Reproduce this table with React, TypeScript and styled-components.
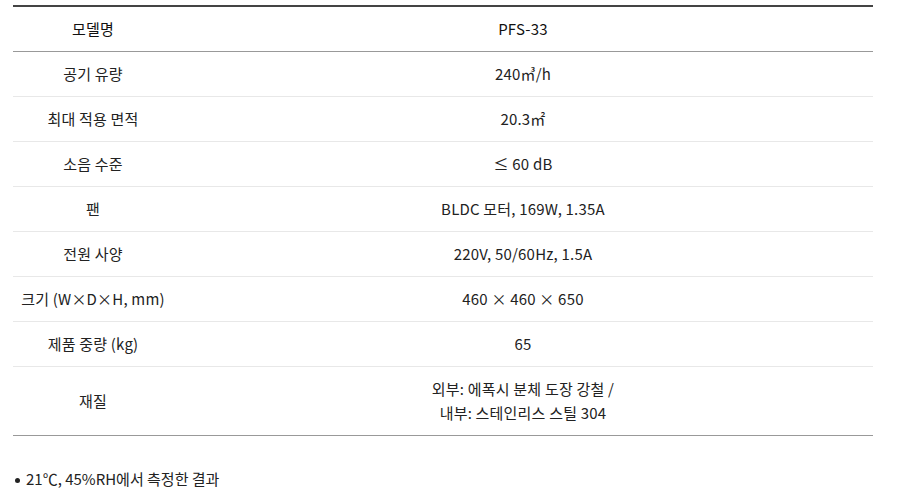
import styled, { createGlobalStyle } from "styled-components"

const specs: { label: string; value: string[] }[] = [
  { label: "공기 유량", value: ["240㎥/h"] },
  { label: "최대 적용 면적", value: ["20.3㎡"] },
  { label: "소음 수준", value: ["≤ 60 dB"] },
  { label: "팬", value: ["BLDC 모터, 169W, 1.35A"] },
  { label: "전원 사양", value: ["220V, 50/60Hz, 1.5A"] },
  { label: "크기 (W×D×H, mm)", value: ["460 × 460 × 650"] },
  { label: "제품 중량 (kg)", value: ["65"] },
  { label: "재질", value: ["외부: 에폭시 분체 도장 강철 /", "내부: 스테인리스 스틸 304"] },
]

export default function App() {
  return (
    <>
      <GlobalStyle />
      <Page>
        <SpecTable>
          <thead>
            <tr>
              <HeadCell $label>모델명</HeadCell>
              <HeadCell>PFS-33</HeadCell>
            </tr>
          </thead>
          <tbody>
            {specs.map((row, i) => (
              <Row key={row.label} $last={i === specs.length - 1}>
                <LabelCell>{row.label}</LabelCell>
                <ValueCell>
                  {row.value.map(line => (
                    <div key={line}>{line}</div>
                  ))}
                </ValueCell>
              </Row>
            ))}
          </tbody>
        </SpecTable>
        <Notes>
          <Note>21℃, 45%RH에서 측정한 결과</Note>
        </Notes>
      </Page>
    </>
  )
}

const GlobalStyle = createGlobalStyle`
  body {
    margin: 0;
    background: #fff;
    color: #222;
    font-family: "Noto Sans CJK KR", "Noto Sans", sans-serif;
  }
`
const Page = styled.div`
  padding: 5px 26px 0 13px;
`
const SpecTable = styled.table`
  width: 100%;
  border-collapse: collapse;
  border-top: 2px solid #444;
  font-size: 15px;
  line-height: 24px;
  letter-spacing: 0.2px;
`
const HeadCell = styled.th<{ $label?: boolean }>`
  width: ${props => props.$label ? "160px" : "auto"};
  padding: 10px 0;
  font-weight: 400;
  color: #111;
  text-align: center;
  border-bottom: 1px solid #999;
`
const Row = styled.tr<{ $last?: boolean }>`
  border-bottom: 1px solid ${props => props.$last ? "#999" : "#e8e8e8"};
`
const LabelCell = styled.td`
  width: 160px;
  padding: 10px 0;
  text-align: center;
`
const ValueCell = styled.td`
  padding: 10px 0;
  text-align: center;
`
const Notes = styled.ul`
  list-style: none;
  margin: 31px 0 0 0;
  padding: 0;
  font-size: 15px;
  line-height: 24px;
`
const Note = styled.li`
  position: relative;
  padding-left: 13px;
  &::before {
    content: "";
    position: absolute;
    left: 2px;
    top: 11px;
    width: 5px;
    height: 5px;
    border-radius: 50%;
    background: #222;
  }
`
